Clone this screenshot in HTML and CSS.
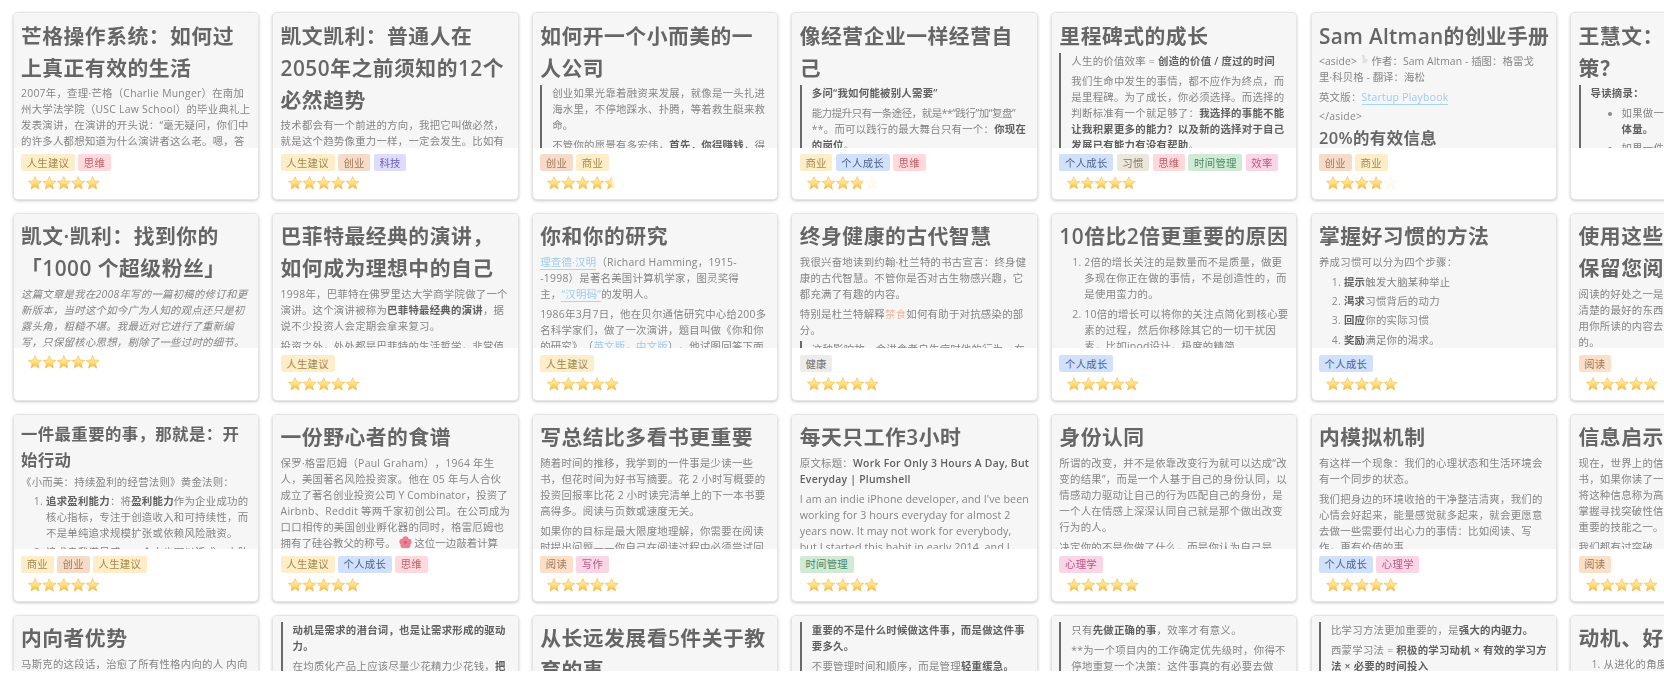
FILE: index.html
```html
<!DOCTYPE html>
<html lang="zh">
<head>
<meta charset="utf-8">
<title>读书笔记</title>
<link rel="stylesheet" href="styles.css">
</head>
<body>
<svg class="defs" aria-hidden="true">
	<defs>
		<linearGradient id="gold" x1="0" y1="0" x2="0" y2="1">
			<stop offset="0" stop-color="#fff2ae"/>
			<stop offset=".55" stop-color="#ffdf7a"/>
			<stop offset="1" stop-color="#fbab30"/>
		</linearGradient>
		<polygon id="star" fill="url(#gold)" stroke="#f5c060" stroke-width=".7" stroke-linejoin="round" points="7,.6 8.82,4.99 13.56,5.37 9.95,8.46 11.06,13.08 7,10.6 2.94,13.08 4.05,8.46 .44,5.37 5.18,4.99"/>
		<symbol id="five-stars" viewBox="0 0 72 14">
			<use href="#star"/>
			<use href="#star" x="14.4"/>
			<use href="#star" x="28.8"/>
			<use href="#star" x="43.2"/>
			<use href="#star" x="57.6"/>
		</symbol>
	</defs>
</svg>

<main class="board">

	<!-- row 1 -->
	<article class="card">
		<div class="preview">
			<h1>芒格操作系统：如何过上真正有效的生活</h1>
			<p>2007年，查理·芒格（Charlie Munger）在南加州大学法学院（USC Law School）的毕业典礼上发表演讲，在演讲的开头说：“毫无疑问，你们中的许多人都想知道为什么演讲者这么老。嗯，答案很简单</p>
		</div>
		<div class="meta">
			<div class="tags"><span class="tag yellow">人生建议</span><span class="tag red">思维</span></div>
			<svg class="stars"><use href="#five-stars"/></svg>
		</div>
	</article>
	<article class="card">
		<div class="preview">
			<h1>凯文凯利：普通人在2050年之前须知的12个必然趋势</h1>
			<p>技术都会有一个前进的方向，我把它叫做必然，就是这个趋势像重力一样，一定会发生。比如有</p>
		</div>
		<div class="meta">
			<div class="tags"><span class="tag yellow">人生建议</span><span class="tag brown">创业</span><span class="tag purple">科技</span></div>
			<svg class="stars"><use href="#five-stars"/></svg>
		</div>
	</article>
	<article class="card">
		<div class="preview">
			<h1>如何开一个小而美的一人公司</h1>
			<blockquote>
				<p>创业如果光靠着融资来发展，就像是一头扎进海水里，不停地踩水、扑腾，等着救生艇来救命。</p>
				<p>不管你的愿景有多宏伟，<b>首先，你得赚钱</b>，得</p>
			</blockquote>
		</div>
		<div class="meta">
			<div class="tags"><span class="tag brown">创业</span><span class="tag yellow">商业</span></div>
			<svg class="stars half"><use href="#five-stars"/></svg>
		</div>
	</article>
	<article class="card">
		<div class="preview">
			<h1>像经营企业一样经营自己</h1>
			<blockquote>
				<p><b>多问“我如何能被别人需要”</b></p>
				<p><span class="snug">能力提升只有一条途径，就是**“践行”加“复盘”</span><br>**。而可以践行的最大舞台只有一个：<b>你现在的岗位</b>。</p>
			</blockquote>
		</div>
		<div class="meta">
			<div class="tags"><span class="tag yellow">商业</span><span class="tag blue">个人成长</span><span class="tag red">思维</span></div>
			<svg class="stars faint"><use href="#five-stars"/></svg>
		</div>
	</article>
	<article class="card">
		<div class="preview">
			<h1>里程碑式的成长</h1>
			<blockquote>
				<p>人生的价值效率 = <b>创造的价值 / 度过的时间</b></p>
				<p>我们生命中发生的事情，都不应作为终点，而是里程碑。为了成长，你必须选择。而选择的判断标准有一个就足够了：<b>我选择的事能不能让我积累更多的能力？以及新的选择对于自己发展已有能力有没有帮助</b>。</p>
			</blockquote>
		</div>
		<div class="meta">
			<div class="tags"><span class="tag blue">个人成长</span><span class="tag stone">习惯</span><span class="tag red">思维</span><span class="tag green">时间管理</span><span class="tag pink">效率</span></div>
			<svg class="stars almost"><use href="#five-stars"/></svg>
		</div>
	</article>
	<article class="card">
		<div class="preview">
			<h1 class="one-line">Sam Altman的创业手册</h1>
			<p class="latin">&lt;aside&gt; <svg class="pointer" viewBox="0 0 10 12"><path d="M2 0h3l1 4 3 1-2 4H3z"/></svg> 作者：Sam Altman - 插图：格雷戈<br>里·科贝格 - 翻译：海松</p>
			<p>英文版：<a href="#">Startup Playbook</a></p>
			<p>&lt;/aside&gt;</p>
			<h2>20%的有效信息</h2>
		</div>
		<div class="meta">
			<div class="tags"><span class="tag brown">创业</span><span class="tag yellow">商业</span></div>
			<svg class="stars faint"><use href="#five-stars"/></svg>
		</div>
	</article>
	<article class="card">
		<div class="preview">
			<h1>王慧文：如何做产品决策？</h1>
			<blockquote>
				<p><b>导读摘录：</b></p>
				<ul>
					<li>如果做一件事的时候，不考虑这件事的<b>体量。</b></li>
					<li>如果一件事</li>
				</ul>
			</blockquote>
		</div>
	</article>

	<!-- row 2 -->
	<article class="card">
		<div class="preview">
			<h1>凯文·凯利：找到你的「1000 个超级粉丝」</h1>
			<p><em>这篇文章是我在2008年写的一篇初稿的修订和更新版本，当时这个如今广为人知的观点还只是初露头角，粗糙不堪。我最近对它进行了重新编写，只保留核心思想，剔除了一些过时的细节。</em></p>
		</div>
		<div class="meta">
			<svg class="stars"><use href="#five-stars"/></svg>
		</div>
	</article>
	<article class="card">
		<div class="preview">
			<h1>巴菲特最经典的演讲，如何成为理想中的自己</h1>
			<p>1998年，巴菲特在佛罗里达大学商学院做了一个演讲。这个演讲被称为<b>巴菲特最经典的演讲</b>，据说不少投资人会定期会拿来复习。</p>
			<p>投资之外，处处都是巴菲特的生活哲学，非常值</p>
		</div>
		<div class="meta">
			<div class="tags"><span class="tag yellow">人生建议</span></div>
			<svg class="stars"><use href="#five-stars"/></svg>
		</div>
	</article>
	<article class="card">
		<div class="preview">
			<h1>你和你的研究</h1>
			<p><a href="#">理查德·汉明</a>（Richard Hamming，1915-<br>-1998）是著名美国计算机学家，图灵奖得<br>主，<a href="#">“汉明码”</a>的发明人。</p>
			<p>1986年3月7日，他在贝尔通信研究中心给200多名科学家们，做了一次演讲，题目叫做《你和你的研究》（<a href="#">英文版</a>，<a href="#">中文版</a>）。他试图回答下面</p>
		</div>
		<div class="meta">
			<div class="tags"><span class="tag yellow">人生建议</span></div>
			<svg class="stars"><use href="#five-stars"/></svg>
		</div>
	</article>
	<article class="card">
		<div class="preview">
			<h1>终身健康的古代智慧</h1>
			<p>我很兴奋地读到约翰·杜兰特的书古宣言：终身健康的古代智慧。不管你是否对古生物感兴趣，它都充满了有趣的内容。</p>
			<p>特别是杜兰特解释<span class="accent">禁食</span>如何有助于对抗感染的部分。</p>
			<blockquote>
				<p>这种影响故，会讲食者自生病时他的行为，在</p>
			</blockquote>
		</div>
		<div class="meta">
			<div class="tags"><span class="tag grey">健康</span></div>
			<svg class="stars"><use href="#five-stars"/></svg>
		</div>
	</article>
	<article class="card">
		<div class="preview">
			<h1>10倍比2倍更重要的原因</h1>
			<ol>
				<li>2倍的增长关注的是数量而不是质量，做更多现在你正在做的事情，不是创造性的，而是使用蛮力的。</li>
				<li>10倍的增长可以将你的关注点简化到核心要素的过程，然后你移除其它的一切干扰因素，比如ipod设计，极度的精简</li>
			</ol>
		</div>
		<div class="meta">
			<div class="tags"><span class="tag blue">个人成长</span></div>
			<svg class="stars"><use href="#five-stars"/></svg>
		</div>
	</article>
	<article class="card">
		<div class="preview">
			<h1>掌握好习惯的方法</h1>
			<p>养成习惯可以分为四个步骤：</p>
			<ol>
				<li><b>提示</b>触发大脑某种举止</li>
				<li><b>渴求</b>习惯背后的动力</li>
				<li><b>回应</b>你的实际习惯</li>
				<li><b>奖励</b>满足你的渴求。</li>
			</ol>
		</div>
		<div class="meta">
			<div class="tags"><span class="tag blue">个人成长</span></div>
			<svg class="stars"><use href="#five-stars"/></svg>
		</div>
	</article>
	<article class="card">
		<div class="preview">
			<h1>使用这些技巧，帮助您保留您阅读的内容</h1>
			<p>阅读的好处之一是你能够学到世界上那些想得最清楚的最好的东西，但是请记住，应该要充分利用你所读的内容去多做点什么才是读书中最重要的。</p>
		</div>
		<div class="meta">
			<div class="tags"><span class="tag orange">阅读</span></div>
			<svg class="stars"><use href="#five-stars"/></svg>
		</div>
	</article>

	<!-- row 3 -->
	<article class="card">
		<div class="preview">
			<h2>一件最重要的事，那就是：开始行动</h2>
			<p>《小而美：持续盈利的经营法则》黄金法则：</p>
			<ol>
				<li><b>追求盈利能力</b>：将<b>盈利能力</b>作为企业成功的核心指标，专注于创造收入和可持续性，而不是单纯追求规模扩张或依赖风险融资。</li>
				<li>追求自我满足感：一个人也可以活成一支队伍</li>
			</ol>
		</div>
		<div class="meta">
			<div class="tags"><span class="tag yellow">商业</span><span class="tag brown">创业</span><span class="tag yellow">人生建议</span></div>
			<svg class="stars"><use href="#five-stars"/></svg>
		</div>
	</article>
	<article class="card">
		<div class="preview">
			<h1>一份野心者的食谱</h1>
			<p>保罗·格雷厄姆（Paul Graham），1964 年生<br>人，美国著名风险投资家。他在 05 年与人合伙<br><span class="latin">成立了著名创业投资公司 Y Combinator，投资了</span><br>Airbnb、Reddit 等两千家初创公司。在公司成为<br>口口相传的美国创业孵化器的同时，格雷厄姆也<br><span class="latin">拥有了硅谷教父的称号。 <svg class="flower" viewBox="0 0 14 14"><circle cx="7" cy="3.6" r="3.2"/><circle cx="3.6" cy="6.2" r="3.2"/><circle cx="10.4" cy="6.2" r="3.2"/><circle cx="4.8" cy="10" r="3.2"/><circle cx="9.2" cy="10" r="3.2"/><circle class="core" cx="7" cy="7" r="1.4"/></svg> 这位一边敲着计算</span></p>
		</div>
		<div class="meta">
			<div class="tags"><span class="tag yellow">人生建议</span><span class="tag blue">个人成长</span><span class="tag red">思维</span></div>
			<svg class="stars"><use href="#five-stars"/></svg>
		</div>
	</article>
	<article class="card">
		<div class="preview">
			<h1>写总结比多看书更重要</h1>
			<p>随着时间的推移，我学到的一件事是少读一些书，但花时间为好书写摘要。花 2 小时写概要的投资回报率比花 2 小时读完清单上的下一本书要高得多。阅读与页数或速度无关。</p>
			<p>如果你的目标是最大限度地理解，你需要在阅读时提出问题——你自己在阅读过程中必须尝试回</p>
		</div>
		<div class="meta">
			<div class="tags"><span class="tag orange">阅读</span><span class="tag pink">写作</span></div>
			<svg class="stars"><use href="#five-stars"/></svg>
		</div>
	</article>
	<article class="card">
		<div class="preview">
			<h1>每天只工作3小时</h1>
			<p>原文标题：<b>Work For Only 3 Hours A Day, But Everyday | Plumshell</b></p>
			<p class="english">I am an indie iPhone developer, and I've been working for 3 hours everyday for almost 2 years now. It may not work for everybody,<br>but I started this habit in early 2014, and I</p>
		</div>
		<div class="meta">
			<div class="tags"><span class="tag green">时间管理</span></div>
			<svg class="stars"><use href="#five-stars"/></svg>
		</div>
	</article>
	<article class="card">
		<div class="preview">
			<h1>身份认同</h1>
			<p>所谓的改变，并不是依靠改变行为就可以达成“改变的结果”，而是一个人基于自己的身份认同，以情感动力驱动让自己的行为匹配自己的身份，是一个人在情感上深深认同自己就是那个做出改变行为的人。</p>
			<p>决定你的不是你做了什么，而是你认为自己是</p>
		</div>
		<div class="meta">
			<div class="tags"><span class="tag pink">心理学</span></div>
			<svg class="stars"><use href="#five-stars"/></svg>
		</div>
	</article>
	<article class="card">
		<div class="preview">
			<h1>内模拟机制</h1>
			<p>有这样一个现象：我们的心理状态和生活环境会有一个同步的状态。</p>
			<p>我们把身边的环境收拾的干净整洁清爽，我们的心情会好起来，能量感觉就多起来，就会更愿意去做一些需要付出心力的事情：比如阅读、写作，更有价值的事</p>
		</div>
		<div class="meta">
			<div class="tags"><span class="tag blue">个人成长</span><span class="tag pink">心理学</span></div>
			<svg class="stars"><use href="#five-stars"/></svg>
		</div>
	</article>
	<article class="card">
		<div class="preview">
			<h1>信息启示录</h1>
			<p>现在，世界上的信息越来越多，每天有很多新<br>书，如果你读了一本好书，就会有新的想法。<br>将这种信息称为高价值信息，我们都应该学会<br>掌握寻找突破性信息的方法，这是未来最为<br>重要的技能之一。</p>
			<p>我们都有过突破</p>
		</div>
		<div class="meta">
			<div class="tags"><span class="tag orange">阅读</span></div>
			<svg class="stars"><use href="#five-stars"/></svg>
		</div>
	</article>

	<!-- row 4, only the top of it fits -->
	<article class="card">
		<div class="preview">
			<h1>内向者优势</h1>
			<p>马斯克的这段话，治愈了所有性格内向的人 内向</p>
		</div>
	</article>
	<article class="card">
		<div class="preview">
			<blockquote>
				<p><b>动机是需求的潜台词，也是让需求形成的驱动力。</b></p>
				<p>在均质化产品上应该尽量少花精力少花钱，<b>把</b></p>
			</blockquote>
		</div>
	</article>
	<article class="card">
		<div class="preview">
			<h1>从长远发展看5件关于教育的事</h1>
		</div>
	</article>
	<article class="card">
		<div class="preview">
			<blockquote>
				<p><b>重要的不是什么时候做这件事，而是做这件事要多久。</b></p>
				<p>不要管理时间和顺序，而是管理<b>轻重缓急。</b></p>
			</blockquote>
		</div>
	</article>
	<article class="card">
		<div class="preview">
			<blockquote>
				<p>只有<b>先做正确的事</b>，效率才有意义。</p>
				<p>**为一个项目内的工作确定优先级时，你得不停地重复一个决策：这件事真的有必要去做</p>
			</blockquote>
		</div>
	</article>
	<article class="card">
		<div class="preview">
			<blockquote>
				<p>比学习方法更加重要的，是<b>强大的内驱力。</b></p>
				<p>西蒙学习法 = <b>积极的学习动机 × 有效的学习方法 × 必要的时间投入</b></p>
			</blockquote>
		</div>
	</article>
	<article class="card">
		<div class="preview">
			<h1>动机、好奇心与</h1>
			<ol>
				<li>从进化的角度</li>
			</ol>
		</div>
	</article>

</main>
</body>
</html>
```

FILE: styles.css
```css
html, body { margin: 0; padding: 0; background: #fff; overflow: hidden; }
body {
	font: 10.4px/16px "Open Sans", "Noto Sans CJK SC", sans-serif;
	letter-spacing: .26px;
	color: #858585;
	text-spacing-trim: space-all;
}

.defs { position: absolute; width: 0; height: 0; }

.board {
	display: grid;
	grid-template-columns: repeat(7, 246.3px);
	grid-auto-rows: 187.6px;
	column-gap: 13.3px;
	row-gap: 13.3px;
	box-sizing: border-box;
	height: 671px;
	padding: 12.3px 0 0 12.7px;
	overflow: hidden;
	filter: blur(.45px);
}

.card {
	display: flex;
	flex-direction: column;
	background: #fff;
	border: 1px solid #e4e4e4;
	border-radius: 5px;
	box-shadow: 0 1px 3px rgba(0,0,0,.22);
	overflow: hidden;
}

.preview {
	flex: none;
	box-sizing: border-box;
	height: 134.3px;
	padding: 6.3px 7.3px 0;
	background: #f6f6f7;
	overflow: hidden;
}

h1 { margin: 0 0 1.9px; font-size: 20.8px; line-height: 32px; font-weight: 600; letter-spacing: .5px; color: #666; }
h1.one-line { white-space: nowrap; letter-spacing: .3px; }
h2 { margin: 0 0 1.3px; font-size: 16.4px; line-height: 25.6px; font-weight: 600; letter-spacing: .4px; color: #666; }
.preview p + h2 { margin-top: -2.8px; }
.preview p { margin: 0 0 3.3px; }
.preview b { color: #606060; font-weight: 600; }
.preview a { color: #9ccbef; text-decoration: none; border-bottom: 1px solid #a9d6f3; }
.accent { color: #f3b79a; }
.latin { letter-spacing: .08px; white-space: nowrap; }
.snug { letter-spacing: -.4px; white-space: nowrap; }
.preview p.english { font-size: 10.67px; letter-spacing: .08px; }

blockquote { margin: 0; padding-left: 10px; border-left: 2.7px solid #6a6a6a; }
ol { margin: 0; padding-left: 25px; }
ul { margin: 0; padding-left: 31px; }
li { margin-bottom: 3.3px; }
li::marker { color: #8a8a8a; }

.pointer { width: 9px; height: 11px; vertical-align: -1px; fill: #e2e2e2; }
.flower { width: 13px; height: 13px; vertical-align: -2px; fill: #ea7f95; }
.flower .core { fill: #c9506c; }

.meta { padding: 6.3px 7.3px 0; }
.tags { display: flex; gap: 3.3px; margin-bottom: 4.6px; }
.tag { padding: 0.8px 5.67px; line-height: 16px; border-radius: 2px; }
.yellow { background: #fdeec9; color: #a4884a; }
.red { background: #ffd9dc; color: #ba6069; }
.brown { background: #f6dcc8; color: #a37858; }
.purple { background: #dedcfa; color: #6a60ba; }
.blue { background: #d1e1fb; color: #4a648c; }
.stone { background: #ece7dc; color: #807660; }
.green { background: #d0ead6; color: #4d8866; }
.pink { background: #f9d5e5; color: #b85a8a; }
.orange { background: #fbdfc9; color: #a37858; }
.grey { background: #ececec; color: #707070; }

.stars { display: block; width: 72px; height: 14px; margin-left: 7.3px; }
.half { -webkit-mask-image: linear-gradient(to right, #000 88%, rgba(0,0,0,.25) 92%, transparent 96%); mask-image: linear-gradient(to right, #000 88%, rgba(0,0,0,.25) 92%, transparent 96%); }
.faint { -webkit-mask-image: linear-gradient(to right, #000 76%, rgba(0,0,0,.12) 80%); mask-image: linear-gradient(to right, #000 76%, rgba(0,0,0,.12) 80%); }
.almost { width: 69px; overflow: hidden; }
```
